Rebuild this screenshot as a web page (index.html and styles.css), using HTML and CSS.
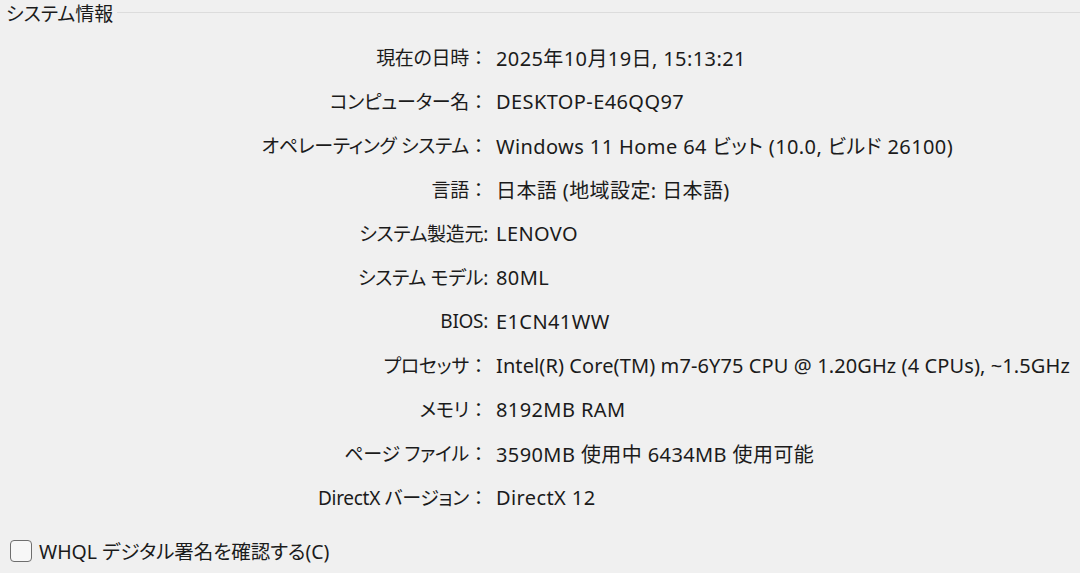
FILE: index.html
```html
<!DOCTYPE html>
<html lang="ja">
<head>
<meta charset="utf-8">
<link rel="stylesheet" href="styles.css">
</head>
<body>
<div class="page">
  <fieldset class="group">
    <legend class="title">システム情報</legend>
    <div class="rows">
      <div class="label">現在の日時<span class="colon">：</span></div><div class="value">2025年10月19日, 15:13:21</div>
      <div class="label">コンピューター名<span class="colon">：</span></div><div class="value">DESKTOP-E46QQ97</div>
      <div class="label">オペレーティング システム<span class="colon">：</span></div><div class="value">Windows 11 Home 64 ビット (10.0, ビルド 26100)</div>
      <div class="label">言語<span class="colon">：</span></div><div class="value">日本語 (地域設定: 日本語)</div>
      <div class="label">システム製造元:</div><div class="value">LENOVO</div>
      <div class="label">システム モデル:</div><div class="value">80ML</div>
      <div class="label">BIOS:</div><div class="value">E1CN41WW</div>
      <div class="label">プロセッサ<span class="colon">：</span></div><div class="value narrow">Intel(R) Core(TM) m7-6Y75 CPU @ 1.20GHz (4 CPUs), ~1.5GHz</div>
      <div class="label">メモリ<span class="colon">：</span></div><div class="value">8192MB RAM</div>
      <div class="label">ページ ファイル<span class="colon">：</span></div><div class="value">3590MB 使用中 6434MB 使用可能</div>
      <div class="label">DirectX バージョン<span class="colon">：</span></div><div class="value">DirectX 12</div>
    </div>
  </fieldset>
  <label class="check">
    <span class="box"></span>
    <span class="check-text">WHQL デジタル署名を確認する(C)</span>
  </label>
</div>
</body>
</html>
```
FILE: styles.css
```css
html, body {
  margin: 0;
  padding: 0;
  background: #f0f0f0;
}
body {
  width: 1080px;
  height: 573px;
  overflow: hidden;
  font-family: "Noto Sans", "Noto Sans CJK JP", sans-serif;
  font-feature-settings: "palt";
  color: #1b1b1b;
  font-size: 20px;
}
.page {
  display: flex;
  flex-direction: column;
}
.group {
  margin: -1px 0 0 0;
  padding: 0;
  border: none;
  border-top: 1px solid #dcdcdc;
  min-width: 0;
}
.title {
  padding: 4px 4px 0 8px;
  margin-left: -2px;
  font-size: 19px;
  line-height: 22px;
}
.rows {
  display: grid;
  grid-template-columns: 488px auto;
  column-gap: 8px;
  grid-auto-rows: 44px;
  align-items: center;
  padding-top: 10px;
}
.label {
  text-align: right;
  white-space: nowrap;
  font-size: 19px;
  letter-spacing: -0.3px;
}
.colon {
  font-feature-settings: normal;
  letter-spacing: 0;
}
.value {
  white-space: nowrap;
  letter-spacing: 0.4px;
}
.narrow {
  letter-spacing: 0.1px;
}
.check {
  display: flex;
  align-items: center;
  gap: 7px;
  padding-left: 10px;
  margin-top: 17px;
}
.box {
  width: 20px;
  height: 20px;
  border: 1px solid #6e6e6e;
  border-radius: 4px;
  background: #f7f7f7;
}
.check-text {
  font-size: 19.5px;
}
```
